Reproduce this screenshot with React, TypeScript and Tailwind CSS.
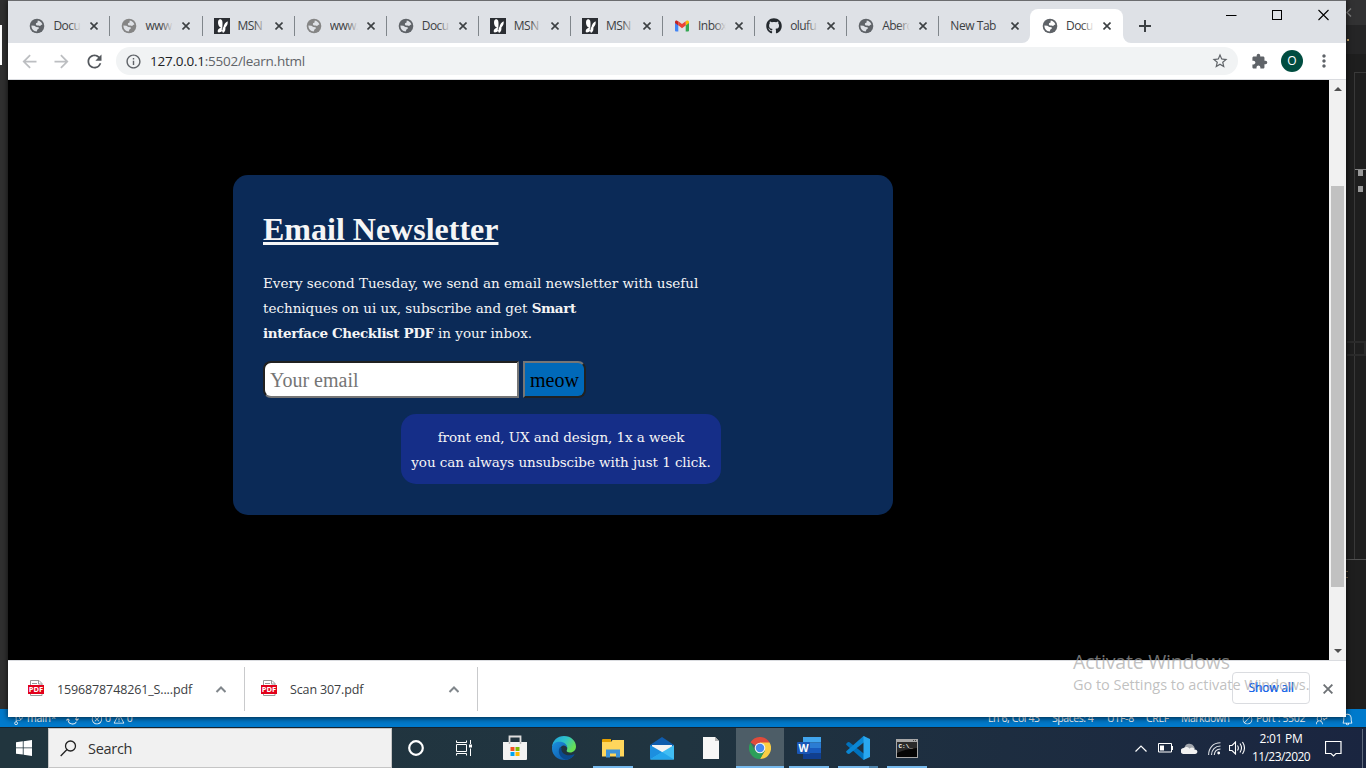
import React from "react";
import { MdExtension, MdStarBorder, MdRefresh, MdArrowBack, MdArrowForward, MdInfoOutline, MdMoreVert } from "react-icons/md";
import { FaGithub } from "react-icons/fa";
import { VscSourceControl, VscSync, VscError, VscWarning, VscCircleSlash, VscFeedback, VscBell } from "react-icons/vsc";

type TabKind = "globe" | "web" | "msn" | "gmail" | "github" | "none";

const tabs: { kind: TabKind; title: string }[] = [
  { kind: "globe", title: "Docu" },
  { kind: "web", title: "www." },
  { kind: "msn", title: "MSN" },
  { kind: "web", title: "www." },
  { kind: "globe", title: "Docu" },
  { kind: "msn", title: "MSN" },
  { kind: "msn", title: "MSN" },
  { kind: "gmail", title: "Inbox" },
  { kind: "github", title: "olufu" },
  { kind: "globe", title: "Aberc" },
  { kind: "none", title: "New Tab" },
];

function Cross({ size = 8, color = "#3c4043", w = 1.6 }: { size?: number; color?: string; w?: number }) {
  return (
    <svg width={size} height={size} viewBox="0 0 8 8" className="shrink-0">
      <path d="M.5.5l7 7M7.5.5l-7 7" stroke={color} strokeWidth={w} />
    </svg>
  );
}

function Globe({ color, land }: { color: string; land: string }) {
  return (
    <svg width="16" height="16" viewBox="0 0 16 16" className="shrink-0">
      <circle cx="8" cy="8" r="7.3" fill={color} />
      <path d="M8.800 2.500l1.600.4c1.500.7 2.700 2 3 3.700l-1.300.4-1 .9-1.600-.5-1.800.1-.9-1.200.4-1.200 1.200-.4z" fill={land} />
      <path d="M2.400 7.600l3 .2 1.900 1.200 2.300.3.300 1.200-1.500 1-.7 2C4.800 13.400 2.400 11.200 2.400 7.600z" fill={land} />
    </svg>
  );
}

function TabIcon({ kind, active }: { kind: TabKind; active?: boolean }) {
  const land = active ? "#ffffff" : "#dee1e6";
  if (kind === "globe") return <Globe color="#5f6368" land={land} />;
  if (kind === "web") return <Globe color="#858585" land={land} />;
  if (kind === "github") return <FaGithub size={16} className="shrink-0 text-[#24292e]" />;
  if (kind === "msn")
    return (
      <svg width="16" height="16" viewBox="0 0 16 16" className="shrink-0">
        <rect width="16" height="16" fill="#2b2e33" />
        <path d="M7.300 9.500C4.500 9 3.600 5.500 4.200 3 4.800.6 7.600.6 8.200 2.800c.5 2.200.3 4 .2 6.200l1 .3c.5-3 2-5 4.200-6 .5 2-.3 4.500-2.200 6.300.2 2-.3 4-1.600 5-1.300.2-1.800-.6-1.500-1.800-1.200 1.300-3 2-4.300 1.500C3 12 5 10 7.300 9.500z" fill="#fff" />
        <path d="M8.700 8.800l-.6 3.400" stroke="#2b2e33" strokeWidth=".7" />
      </svg>
    );
  if (kind === "gmail")
    return (
      <svg width="16" height="16" viewBox="0 0 16 16" className="shrink-0">
        <path d="M1 4.500l3.300 2.300V13.500H2a1 1 0 0 1-1-1z" fill="#4285f4" />
        <path d="M15 4.500l-3.300 2.300V13.500H14a1 1 0 0 0 1-1z" fill="#34a853" />
        <path d="M11.700 3.500v4L15 5V4c0-1.500-1.700-2-2.600-1.200z" fill="#fbbc04" />
        <path d="M4.300 3.300v4L8 10.200l3.700-2.800V3.300L8 6.100z" fill="#ea4335" />
        <path d="M1 4v1l3.300 2.500v-4l-.8-.6C2.500 2 1 2.500 1 4z" fill="#c5221f" />
      </svg>
    );
  return null;
}

function Tab({ kind, title, active }: { kind: TabKind; title: string; active?: boolean }) {
  const fade = active
    ? "absolute inset-y-0 right-0 w-3 bg-gradient-to-r from-transparent to-white"
    : "absolute inset-y-0 right-0 w-3 bg-gradient-to-r from-transparent to-[#dee1e6]";
  return (
    <div className={active ? "relative -ml-[1.4px] flex h-[34px] w-[93px] shrink-0 items-center rounded-t-lg bg-white pl-[12px]" : "relative flex h-[34px] w-[92.1px] shrink-0 items-center pl-[11px]"}>
      <TabIcon kind={kind} active={active} />
      <span className={kind === "none" ? "w-[54px] text-[12px] tracking-[-0.45px] whitespace-nowrap" : "relative ml-2 w-7 overflow-hidden text-[12px] tracking-[-0.55px] whitespace-nowrap"}>
        {title}
        {kind !== "none" && <span className={fade} />}
      </span>
      <span className={kind === "none" ? "ml-[7px] flex" : "ml-[9px] flex"}>
        <Cross />
      </span>
      {!active && kind !== "none" && <span className="absolute top-[7px] right-0 h-5 w-px bg-[#80868b]" />}
      {active && (
        <>
          <svg width="8" height="8" viewBox="0 0 8 8" className="absolute bottom-0 -left-2"><path d="M8 0v8H0a8 8 0 0 0 8-8z" fill="#fff" /></svg>
          <svg width="8" height="8" viewBox="0 0 8 8" className="absolute -right-2 bottom-0"><path d="M0 0v8h8a8 8 0 0 1-8-8z" fill="#fff" /></svg>
        </>
      )}
    </div>
  );
}

function TabStrip() {
  return (
    <div className="relative flex h-[43px] items-end border-t border-[#6b6c6f] bg-[#dee1e6] pl-[10.4px] text-[#3c4043]">
      {tabs.map((t, i) => (
        <Tab key={i} kind={t.kind} title={t.title} />
      ))}
      <Tab kind="globe" title="Docu" active />
      <svg width="12" height="12" viewBox="0 0 12 12" className="mb-[11px] ml-4"><path d="M6 0v12M0 6h12" stroke="#3c4043" strokeWidth="2" /></svg>
      <div className="absolute top-[8px] right-[17px] flex items-center gap-[35px]">
        <svg width="11" height="12" viewBox="0 0 11 12"><path d="M0 6.500h10.500" stroke="#000" /></svg>
        <svg width="11" height="12" viewBox="0 0 11 12"><rect x=".5" y="1.500" width="9" height="9" fill="none" stroke="#000" /></svg>
        <svg width="11" height="12" viewBox="0 0 11 12"><path d="M.5 1l10 10M10.500 1l-10 10" stroke="#000" strokeWidth="1.1" /></svg>
      </div>
    </div>
  );
}

function Toolbar() {
  return (
    <div className="flex h-[37px] items-center border-b border-[#dadce0] bg-white text-[#5f6368]">
      <MdArrowBack size={21} className="ml-[11px] text-[#bcbec1]" />
      <MdArrowForward size={21} className="ml-[11px] text-[#bcbec1]" />
      <MdRefresh size={21} className="ml-[12px] text-[#54585d]" />
      <div className="ml-[11px] flex h-7 w-[1122px] items-center rounded-full bg-[#f1f3f4] pl-[9px]">
        <MdInfoOutline size={17} />
        <span className="ml-2 flex-1 text-[13.500px] tracking-[-0.25px]">
          <span className="text-[#202124]">127.0.0.1</span>:5502/learn.html
        </span>
        <MdStarBorder size={18} className="mr-[9px]" />
      </div>
      <MdExtension size={17} className="ml-[13px]" />
      <span className="ml-[13px] flex h-[22px] w-[22px] items-center justify-center rounded-full bg-[#004d40] text-[12px] text-white">O</span>
      <MdMoreVert size={20} className="ml-[11px]" />
    </div>
  );
}

function Newsletter() {
  return (
    <section className="mt-[95px] ml-[225px] h-[340px] w-[660px] rounded-[15px] bg-[#0b2a57] px-[30px] pt-[36px] text-[#f5f5f5]">
      <h1 className="h-[37px] font-['Liberation_Serif',serif] text-[32px] leading-[37px] font-bold whitespace-nowrap underline">Email Newsletter</h1>
      <div className="mt-[23px] h-[75px] font-['DejaVu_Serif',serif] text-[13.5px] leading-[25px] tracking-[-0.01px] whitespace-nowrap">
        <p className="h-[25px]">Every second Tuesday, we send an email newsletter with useful</p>
        <p className="h-[25px]">techniques on ui ux, subscribe and get <b className="tracking-[-0.4px]">Smart</b></p>
        <p className="h-[25px]"><b className="tracking-[-0.4px]">interface Checklist PDF</b> in your inbox.</p>
      </div>
      <div className="mt-[15px] flex gap-1 font-['Liberation_Serif',serif] text-[20px]">
        <div className="flex h-[37px] w-[256px] items-center rounded-l-[8px] border-2 border-t-[#212121] border-r-[#767676] border-b-[#767676] border-l-[#212121] bg-white px-[5px] text-[#757575]">Your email</div>
        <button className="h-[37px] w-[63px] rounded-r-[8px] border-2 border-t-[#767676] border-r-[#212121] border-b-[#212121] border-l-[#767676] bg-[#0069b9] text-black">meow</button>
      </div>
      <div className="mt-4 ml-[138px] h-[70px] w-[320px] rounded-[15px] bg-[#152e88] pt-[11px] text-center font-['DejaVu_Serif',serif] text-[13.5px] leading-[25px] tracking-[-0.07px] whitespace-nowrap">
        <p className="h-[25px]">front end, UX and design, 1x a week</p>
        <p className="h-[25px]">you can always unsubscibe with just 1 click.</p>
      </div>
    </section>
  );
}

function Scrollbar() {
  return (
    <div className="flex w-[17px] flex-col items-center bg-[#f1f1f1]">
      <svg width="8" height="4" viewBox="0 0 8 4" className="mt-[7px]"><path d="M0 4l4-4 4 4z" fill="#505050" /></svg>
      <div className="mt-[95px] h-[401px] w-[13px] bg-[#c1c1c1]" />
      <svg width="8" height="4" viewBox="0 0 8 4" className="mt-[62px]"><path d="M0 0l4 4 4-4z" fill="#505050" /></svg>
    </div>
  );
}

function PdfIcon() {
  return (
    <svg width="16" height="16" viewBox="0 0 16 16">
      <path d="M2.500.5h8.500l3 3v12H2.500z" fill="#fff" stroke="#999" />
      <path d="M10.500.5v3.500H14M4 3.500h5" stroke="#999" fill="none" />
      <rect y="5" width="16" height="9" fill="#e2001a" />
      <text x="8" y="12.300" textAnchor="middle" fontSize="7.500" fontWeight="bold" fontFamily="Open Sans, sans-serif" fill="#fff">PDF</text>
    </svg>
  );
}

function Download({ name }: { name: string }) {
  return (
    <div className="flex h-[44px] w-[233px] items-center border-r border-[#c9cacc] pr-[18px] pl-[16px]">
      <span className="-mt-[2px] flex"><PdfIcon /></span>
      <span className="mt-[2px] ml-[13px] flex-1 text-[12.500px] tracking-[-0.13px] whitespace-nowrap text-[#3c4043]">{name}</span>
      <svg width="11" height="7" viewBox="0 0 11 7"><path d="M1.500 6L6 1.500 10.500 6" fill="none" stroke="#80868b" strokeWidth="2" /></svg>
    </div>
  );
}

function Chrome() {
  return (
    <div className="absolute top-0 left-[8px] flex h-[717px] w-[1338px] flex-col bg-white shadow-[0_1px_6px_rgba(0,0,0,0.75)]">
      <TabStrip />
      <Toolbar />
      <div className="flex h-[580px] bg-black">
        <div className="flex-1"><Newsletter /></div>
        <Scrollbar />
      </div>
      <div className="flex h-[57px] items-center border-t border-[#dadce0] bg-white pl-[4px]">
        <Download name="1596878748261_S....pdf" />
        <Download name="Scan 307.pdf" />
        <div className="-mt-[2px] ml-auto flex h-8 w-[78px] items-center justify-center rounded-[4px] border border-[#dadce0] text-[12px] tracking-[-0.15px] text-[#1a66e8] [text-shadow:0.3px_0_0_#1a66e8]">Show all</div>
        <span className="mr-[13px] ml-[13px] -mt-px flex"><Cross size={10} color="#6d7175" w={1.5} /></span>
      </div>
    </div>
  );
}

function Editor() {
  return (
    <div className="flex h-[727px] flex-col bg-[#1e1e1e]">
      <div className="flex h-[709px] justify-between">
        <div className="w-2 bg-[#303030] pt-[25px]"><div className="h-10 w-[2px] bg-white" /></div>
        <div className="flex w-5 flex-col">
          <div className="h-[25px] bg-[#323233] pt-[8px]">
            <svg width="6" height="9" viewBox="0 0 6 9"><path d="M5 .5l-4 4 4 4" fill="none" stroke="#808080" strokeWidth="1.400" /></svg>
          </div>
          <div className="h-[29px] bg-[#252526] pt-[14px] pl-[1px]"><div className="h-[2px] w-[2px] bg-[#c9a66b]" /></div>
          <div className="mt-[18px] ml-2 flex h-[487px] flex-col border-t border-l border-[#393939]">
            <div className="mt-[96px] h-px bg-[#858585]" />
            <div className="ml-[3px] h-[6px] w-[5px] bg-[#999]" />
            <div className="mt-[10px] ml-[3px] h-[6px] w-[5px] bg-[#999]" />
            <div className="mt-[149px] -ml-2 h-[15px] border-2 border-l-0 border-[#2b2b2b]" />
          </div>
          <div className="h-px bg-[#505050]" />
          <div className="mt-[11px] h-[7px] w-[2px] border-y border-[#79664a]" />
        </div>
      </div>
      <div className="flex h-[18px] items-center bg-[#007acc] pt-[2px] text-[10.500px] tracking-[-0.25px] whitespace-nowrap text-white">
        <VscSourceControl size={11} className="ml-[13px]" />
        <span className="ml-[3px] w-[27px]">main*</span>
        <VscSync size={13} className="ml-[12px]" />
        <VscError size={12} className="ml-[12px]" />
        <span className="ml-[2px]">0</span>
        <VscWarning size={12} className="ml-[2px]" />
        <span className="ml-[2px]">0</span>
        <div className="ml-auto flex items-center pr-[12px]">
          <span className="w-[64px] tracking-[-0.4px]">Ln 6, Col 43</span>
          <span className="w-[55px] tracking-[-0.45px]">Spaces: 4</span>
          <span className="w-[39px]">UTF-8</span>
          <span className="w-[35px]">CRLF</span>
          <span className="w-[61px] tracking-[-0.5px]">Markdown</span>
          <VscCircleSlash size={11} />
          <span className="ml-[3px] w-[60px] tracking-[-0.35px]">Port : 5502</span>
          <VscFeedback size={12} />
          <VscBell size={13} className="ml-[13px]" />
        </div>
      </div>
    </div>
  );
}

function StoreIcon() {
  return (
    <svg width="24" height="26" viewBox="0 0 24 26">
      <path d="M6.500 8V1.500h11V8" fill="none" stroke="#ddd" strokeWidth="1.800" />
      <path d="M0 7h24v17a1 1 0 0 1-1 1H1a1 1 0 0 1-1-1z" fill="#f2f2f2" />
      <path d="M6.500 7v2M17.500 7v2" stroke="#bbb" strokeWidth="1.500" />
      <path d="M7.500 12h4v4h-4z" fill="#f25022" /><path d="M12.500 12h4v4h-4z" fill="#7fba00" />
      <path d="M7.500 17h4v4h-4z" fill="#00a4ef" /><path d="M12.500 17h4v4h-4z" fill="#ffb900" />
    </svg>
  );
}

function EdgeIcon() {
  return (
    <svg width="24" height="24" viewBox="0 0 24 24">
      <defs>
        <linearGradient id="edgeTop" x1="0" y1="0" x2="1" y2=".5"><stop offset="0" stopColor="#1d9fe0" /><stop offset=".55" stopColor="#2fc3c8" /><stop offset="1" stopColor="#68e053" /></linearGradient>
        <linearGradient id="edgeLow" x1="0" y1="0" x2="1" y2="1"><stop offset="0" stopColor="#1b8fde" /><stop offset="1" stopColor="#0c4f9e" /></linearGradient>
      </defs>
      <path d="M0 11C.5 4.500 5.500 0 12 0c7 0 12 5 12 10.500 0 3.500-2.500 6-6 6-2.500 0-4-1-3.200-2.200 1.200-2 .2-5.800-4-5.800C5 8.500 0 9.500 0 11z" fill="url(#edgeTop)" />
      <path d="M0 11.500C.5 7.500 4 5.800 7.500 5.800c4.500 0 7.800 2.700 7.800 6.200-1-2-2.400-2.800-4.300-2.500-3 1-4.500 4.500-2 8.500 2.800 4.300 8.500 5 13.500.5C20.500 22 16.500 24 12.500 24 5 24-.5 18.500 0 11.500z" fill="url(#edgeLow)" />
      <path d="M7.700 11.500c-2.500 5 .3 10.500 6.300 12.300 4-.5 7-2.500 8.600-5.700-5 2.200-9.600 1.400-12-1.600-1-1.300-1.500-3-1-4.500z" fill="#0b4a8d" />
    </svg>
  );
}

function ExplorerIcon() {
  return (
    <svg width="22" height="19" viewBox="0 0 22 19">
      <path d="M0 1a1 1 0 0 1 1-1h8v3H0z" fill="#e5a000" />
      <path d="M0 3h9l1.500-2H22v16.500H0z" fill="#ffd65c" />
      <path d="M4 18.500V10.500h14v8h-4v-4H8v4z" fill="#3d93d8" />
    </svg>
  );
}

function MailIcon() {
  return (
    <svg width="24" height="23" viewBox="0 0 24 23">
      <path d="M0 8l12-8 12 8-2 3H2z" fill="#0f5cad" />
      <path d="M2 8h20v6l-10 4L2 14z" fill="#f3f3f3" />
      <path d="M0 8l24 14H0z" fill="#1c8fdf" />
      <path d="M24 8v14.500H0z" fill="#41bdf3" /><path d="M12 15l12 7.500H0z" fill="#25a5eb" />
    </svg>
  );
}

function ChromeIcon() {
  return (
    <svg width="22" height="22" viewBox="0 0 24 24">
      <path d="M12 12L1.600 6A12 12 0 0 1 22.400 6z" fill="#df4b3b" />
      <path d="M12 12V6h10.400A12 12 0 0 1 12 24l5.200-9z" fill="#fbce44" />
      <path d="M12 12l5.200 3L12 24A12 12 0 0 1 1.600 6l5.200 9z" fill="#2c9f5a" />
      <circle cx="12" cy="12" r="5.800" fill="#f3f3f3" /><circle cx="12" cy="12" r="4.600" fill="#4688f1" />
    </svg>
  );
}

function WordIcon() {
  return (
    <svg width="24" height="22" viewBox="0 0 24 22">
      <path d="M6 0h18v5.500H6z" fill="#41a5ee" /><path d="M6 5.500h18V11H6z" fill="#2b7cd3" />
      <path d="M6 11h18v5.500H6z" fill="#185abd" /><path d="M6 16.500h18V22H6z" fill="#103f91" />
      <rect y="5" width="13" height="12" rx="1" fill="#1a56b5" />
      <text x="6.500" y="14.700" textAnchor="middle" fontSize="10.500" fontWeight="bold" fontFamily="Open Sans, sans-serif" fill="#fff">W</text>
    </svg>
  );
}

function CodeIcon() {
  return (
    <svg width="24" height="24" viewBox="0 0 24 24">
      <path d="M0 8l2-2 1.500.2L19 18.500V23L17.500 24 .5 9z" fill="#0072bd" />
      <path d="M0 16l2 2 1.500-.2L19 5.500V1L17.500 0 .5 15z" fill="#0a86d3" />
      <path d="M17.500 0L24 3v18l-6.500 3V0z" fill="#29a7ef" />
    </svg>
  );
}

function TerminalIcon() {
  return (
    <svg width="22" height="19" viewBox="0 0 22 19">
      <rect width="22" height="19" fill="#a8a8a8" /><rect x="1" y="3" width="20" height="15" fill="#050505" />
      <path d="M1 3h20v6Q9 10 1 14z" fill="#2b2b2b" />
      <path d="M17 1.500h1M19 1.500h1" stroke="#444" />
      <text x="2.500" y="9" fontSize="6" fontFamily="Liberation Mono, monospace" fontWeight="bold" fill="#fff">C:\_</text>
    </svg>
  );
}

function FileIcon() {
  return (
    <svg width="16" height="22" viewBox="0 0 16 22"><path d="M0 0h12l4 4v18H0z" fill="#f7f7f7" /><path d="M12 0v4h4z" fill="#b5b5b5" /></svg>
  );
}

const apps: { icon: React.ReactNode; state: "idle" | "open" | "active" | "multi" }[] = [
  { icon: <StoreIcon />, state: "idle" },
  { icon: <EdgeIcon />, state: "idle" },
  { icon: <ExplorerIcon />, state: "open" },
  { icon: <MailIcon />, state: "idle" },
  { icon: <FileIcon />, state: "idle" },
  { icon: <ChromeIcon />, state: "active" },
  { icon: <WordIcon />, state: "open" },
  { icon: <CodeIcon />, state: "multi" },
  { icon: <TerminalIcon />, state: "open" },
];

function Taskbar() {
  return (
    <div className="flex h-[41px] items-stretch border-t border-[#14232f] bg-gradient-to-r from-[#21353e] via-[#203440] to-[#1a2540] text-white">
      <div className="flex w-12 items-center justify-center">
        <svg width="16" height="16" viewBox="0 0 16 16"><path d="M0 2.300L6.800 1.300v6.200H0zM7.600 1.200L16 0v7.500H7.600zM0 8.300h6.800v6.300L0 13.700zM7.600 8.300H16V16l-8.400-1.200z" fill="#fff" /></svg>
      </div>
      <div className="flex w-[344px] items-center border border-[#c5c5c5] bg-[#f1f1f1] pl-[11px]">
        <svg width="17" height="17" viewBox="0 0 17 17"><circle cx="10.500" cy="6" r="5" fill="none" stroke="#222" strokeWidth="1.300" /><path d="M7 9.500L.7 16" stroke="#222" strokeWidth="1.300" /></svg>
        <span className="mt-px ml-[11px] text-[14.500px] tracking-[-0.3px] text-[#333]">Search</span>
      </div>
      <div className="flex w-[48px] items-center justify-center">
        <svg width="16" height="16" viewBox="0 0 16 16"><circle cx="8" cy="8" r="6.800" fill="none" stroke="#fff" strokeWidth="2.200" /></svg>
      </div>
      <div className="flex w-[51px] items-center pl-[16px]">
        <svg width="16" height="16" viewBox="0 0 16 16"><path d="M.5.5v2h10v-2M.5 4.500h10v7H.5zM.5 15.500v-2h10v2M14.500 0v4M14.500 8.500V16" fill="none" stroke="#fff" /><path d="M13 4.500h3v3h-3z" fill="#fff" /></svg>
      </div>
      {apps.map((a, i) => (
        <div key={i} className={a.state === "active" ? "relative mr-px flex w-12 items-center justify-center bg-[#4d5d67]" : "relative mr-px flex w-12 items-center justify-center"}>
          {a.icon}
          {a.state === "open" && <span className="absolute bottom-0 left-1 h-[2px] w-10 bg-[#76b9ed]" />}
          {a.state === "active" && <span className="absolute bottom-0 left-0 h-[2px] w-12 bg-[#76b9ed]" />}
          {a.state === "multi" && (
            <span className="absolute bottom-0 left-1 flex h-[2px] w-10"><span className="w-[31px] bg-[#76b9ed]" /><span className="w-[9px] bg-[#4f85ae]" /></span>
          )}
        </div>
      ))}
      <div className="ml-auto flex items-center">
        <svg width="12" height="7" viewBox="0 0 12 7"><path d="M.5 6.500L6 1l5.500 5.500" fill="none" stroke="#fff" strokeWidth="1.200" /></svg>
        <svg width="15" height="10" viewBox="0 0 15 10" className="ml-[11px]"><path d="M.5.5h13v8.500H.5z" fill="none" stroke="#fff" /><path d="M2 2.500h4v5H2z" fill="#fff" /><path d="M14.500 3v4" stroke="#fff" /></svg>
        <svg width="17" height="11" viewBox="0 0 17 11" className="ml-[8px]"><path d="M3.500 5.500a5 5 0 0 1 9.500-2L14 6z" fill="#a2a6ad" /><path d="M3 11a3 3 0 0 1-.5-6C5 3.500 7 4 8.500 5.500 11 3.500 13 4.500 13.500 6.500c3.500-.3 4 4 .5 4.500z" fill="#f1f1f1" /></svg>
        <svg width="13" height="13" viewBox="0 0 13 13" className="ml-[10px]"><g fill="none" stroke="#dfe2e6" strokeWidth="1.100"><path d="M.6 13C.6 6 5 .8 12.500.8" /><path d="M3.500 13C3.500 8 7 4 12.500 4" /><path d="M6.300 13C6.500 9.500 8.500 7.200 12.500 7" /></g><circle cx="10.700" cy="11" r="1.400" fill="#fff" /></svg>
        <svg width="17" height="14" viewBox="0 0 17 14" className="ml-[8px]"><g fill="none" stroke="#fff" strokeWidth="1.100"><path d="M.5 4.500h2.500L6.500 1v12L3 9.500H.5z" /><path d="M8.500 4.500q1.700 2.500 0 5M11 2.500q3 4.500 0 9M13.500 1q4 6 0 12" /></g></svg>
        <div className="-mt-px ml-[2px] flex w-[66px] flex-col items-center text-[12px] leading-[18px] whitespace-nowrap">
          <span className="tracking-[-0.3px]">2:01 PM</span>
          <span className="tracking-[-0.55px]">11/23/2020</span>
        </div>
        <svg width="17" height="17" viewBox="0 0 17 17" className="ml-[11px]"><path d="M.5 1.500h15.500v12h-5l-2.500 2.500L6 13.500H.5z" fill="none" stroke="#fff" strokeWidth="1.200" /></svg>
        <span className="mr-[3px] ml-[20px] h-[39px] w-px bg-[#606b7d]" />
      </div>
    </div>
  );
}

export default function App() {
  return (
    <main className="relative h-[768px] w-[1366px] overflow-hidden bg-black font-['Open_Sans','Noto_Sans',sans-serif]">
      <Editor />
      <Chrome />
      <Taskbar />
      <div className="pointer-events-none absolute top-[649px] left-[1073px] whitespace-nowrap text-[#a5a5a5]/70">
        <div className="text-[19.500px] leading-[25px] tracking-[-0.2px]">Activate Windows</div>
        <div className="text-[14.500px] leading-[21px] tracking-[-0.03px]">Go to Settings to activate Windows.</div>
      </div>
    </main>
  );
}
